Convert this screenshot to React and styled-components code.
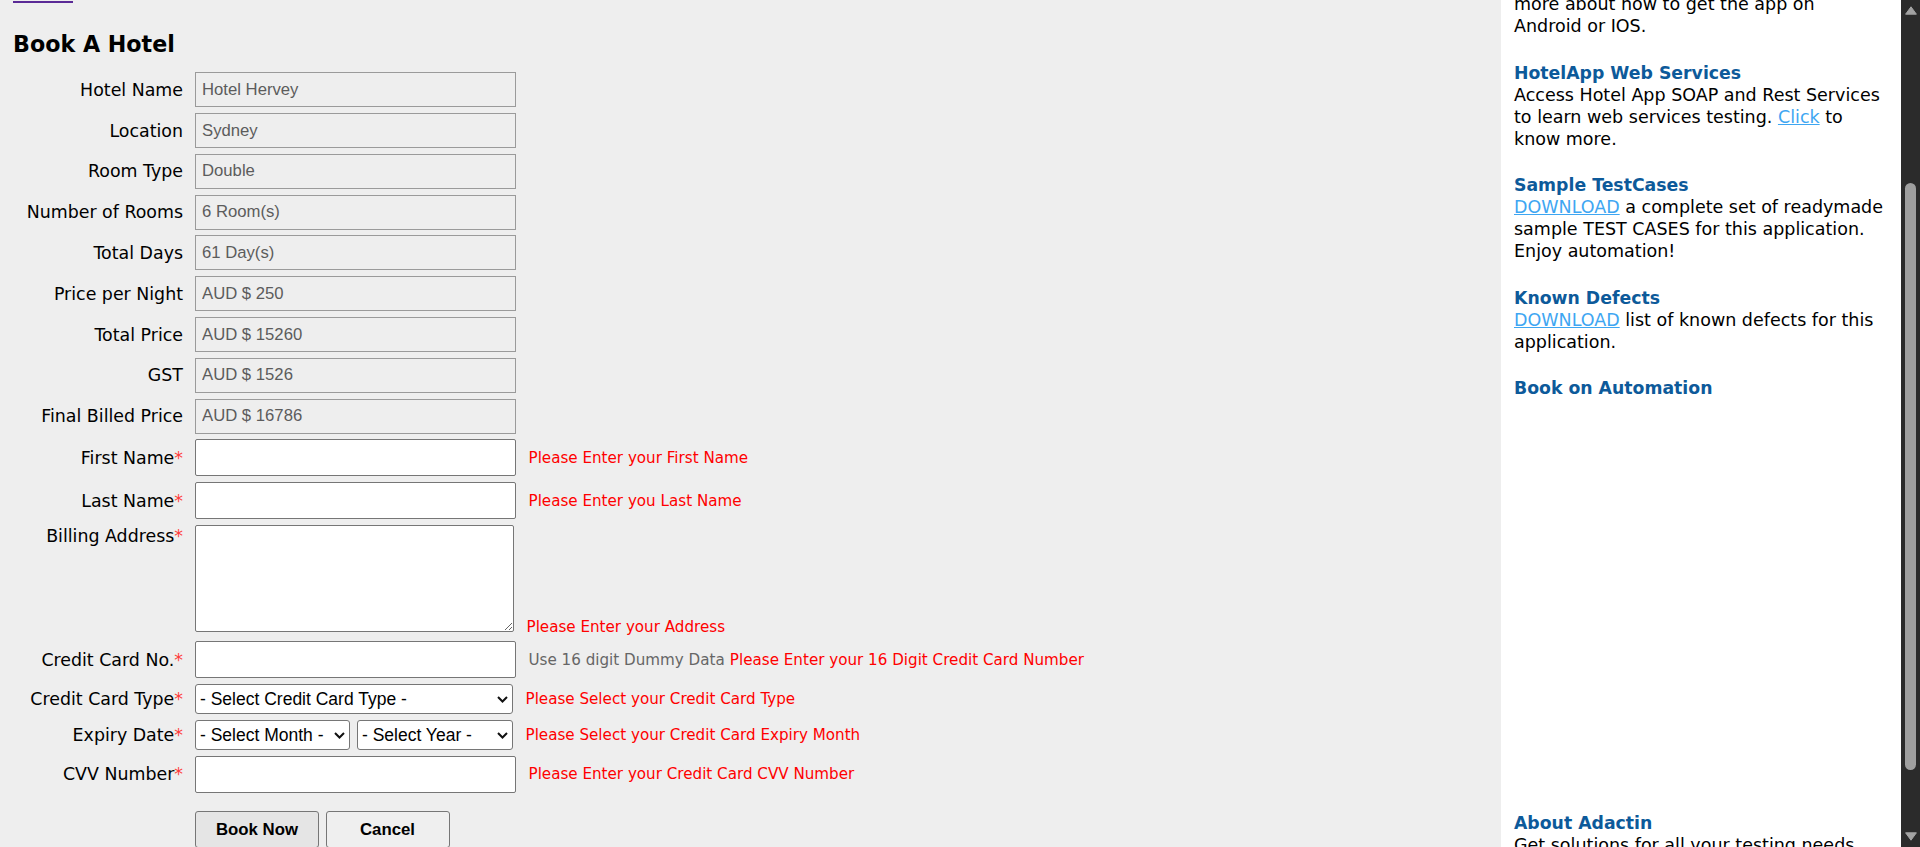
import React from 'react';
import styled, { createGlobalStyle } from 'styled-components';

const GlobalStyle = createGlobalStyle`
  html, body {
    margin: 0;
    padding: 0;
    height: 100%;
    overflow: hidden;
    background: #eeeeee;
  }
  body {
    font-family: "DejaVu Sans", Verdana, sans-serif;
    color: #000;
  }
`;

const bookingSummary = [
  ['Hotel Name', 'Hotel Hervey'],
  ['Location', 'Sydney'],
  ['Room Type', 'Double'],
  ['Number of Rooms', '6 Room(s)'],
  ['Total Days', '61 Day(s)'],
  ['Price per Night', 'AUD $ 250'],
  ['Total Price', 'AUD $ 15260'],
  ['GST', 'AUD $ 1526'],
  ['Final Billed Price', 'AUD $ 16786'],
];

export default function App() {
  return (
    <>
      <GlobalStyle />
      <Page>
        <Main>
          <VisitedLink />
          <Title>Book A Hotel</Title>
          <Form onSubmit={e => e.preventDefault()}>
            {bookingSummary.map(([label, value]) => (
              <React.Fragment key={label}>
                <Label>{label}</Label>
                <Field>
                  <TextInput $readonly readOnly value={value} />
                </Field>
              </React.Fragment>
            ))}

            <Label>First Name<Req>*</Req></Label>
            <Field>
              <TextInput type="text" />
              <Msg>Please Enter your First Name</Msg>
            </Field>

            <Label>Last Name<Req>*</Req></Label>
            <Field>
              <TextInput type="text" />
              <Msg>Please Enter you Last Name</Msg>
            </Field>

            <Label $top>Billing Address<Req>*</Req></Label>
            <Field $bottom>
              <Address />
              <Msg>Please Enter your Address</Msg>
            </Field>

            <Label>Credit Card No.<Req>*</Req></Label>
            <Field>
              <TextInput type="text" maxLength={16} />
              <span>
                <Msg $hint>Use 16 digit Dummy Data</Msg>{' '}
                <Msg>Please Enter your 16 Digit Credit Card Number</Msg>
              </span>
            </Field>

            <Label>Credit Card Type<Req>*</Req></Label>
            <Field>
              <Dropdown width={318}>
                <option>- Select Credit Card Type -</option>
                <option>American Express</option>
                <option>VISA</option>
                <option>Master Card</option>
                <option>Other</option>
              </Dropdown>
              <Msg>Please Select your Credit Card Type</Msg>
            </Field>

            <Label>Expiry Date<Req>*</Req></Label>
            <Field>
              <SelectPair>
                <Dropdown width={155}>
                  <option>- Select Month -</option>
                  <option>January</option>
                  <option>February</option>
                </Dropdown>
                <Dropdown width={156}>
                  <option>- Select Year -</option>
                  <option>2025</option>
                  <option>2026</option>
                </Dropdown>
              </SelectPair>
              <Msg>Please Select your Credit Card Expiry Month</Msg>
            </Field>

            <Label>CVV Number<Req>*</Req></Label>
            <Field>
              <TextInput type="text" maxLength={4} />
              <Msg>Please Enter your Credit Card CVV Number</Msg>
            </Field>

            <span />
            <Actions>
              <Button type="submit" $primary>Book Now</Button>
              <Button type="button">Cancel</Button>
            </Actions>
          </Form>
        </Main>

        <Sidebar>
          <Block>
            <Text>more about how to get the app on<br />Android or IOS.</Text>
          </Block>
          <Block>
            <BlockTitle>HotelApp Web Services</BlockTitle>
            <Text>
              Access Hotel App SOAP and Rest Services<br />
              to learn web services testing. <Link href="#">Click</Link> to<br />
              know more.
            </Text>
          </Block>
          <Block>
            <BlockTitle>Sample TestCases</BlockTitle>
            <Text>
              <Link href="#">DOWNLOAD</Link> a complete set of readymade<br />
              sample TEST CASES for this application.<br />
              Enjoy automation!
            </Text>
          </Block>
          <Block>
            <BlockTitle>Known Defects</BlockTitle>
            <Text>
              <Link href="#">DOWNLOAD</Link> list of known defects for this<br />
              application.
            </Text>
          </Block>
          <Block>
            <BlockTitle>Book on Automation</BlockTitle>
            <CoverSlot />
          </Block>
          <Block>
            <BlockTitle>About Adactin</BlockTitle>
            <Text>Get solutions for all your testing needs.</Text>
          </Block>
        </Sidebar>

        <ScrollBar>
          <ScrollArrow viewBox="0 0 12 9">
            <path d="M6 0.8 L11.4 8.2 L0.6 8.2 Z" fill="#a3a3a3" stroke="#a3a3a3" strokeLinejoin="round" />
          </ScrollArrow>
          <Thumb $offset={168} $size={587} />
          <Spacer />
          <ScrollArrow viewBox="0 0 12 9">
            <path d="M0.6 0.8 L11.4 0.8 L6 8.2 Z" fill="#a3a3a3" stroke="#a3a3a3" strokeLinejoin="round" />
          </ScrollArrow>
        </ScrollBar>
      </Page>
    </>
  );
}

function Dropdown({ width, children }) {
  return (
    <SelectWrap>
      <Select $width={width}>{children}</Select>
      <Chevron viewBox="0 0 11 7">
        <path d="M1 1 L5.5 5.5 L10 1" fill="none" stroke="#111" strokeWidth="2" />
      </Chevron>
    </SelectWrap>
  );
}

const Page = styled.div`
  display: flex;
  height: 100vh;
  overflow: hidden;
`;

const Main = styled.main`
  flex: 1;
  min-width: 0;
  padding-left: 13px;
  overflow: hidden;
`;

const VisitedLink = styled.div`
  width: 60px;
  height: 2px;
  margin-top: 1px;
  background: #5a2a96;
`;

const Title = styled.h2`
  margin: 27px 0 14.3px;
  font-size: 22.2px;
  line-height: 28px;
  font-weight: bold;
`;

const Form = styled.form`
  display: grid;
  grid-template-columns: 170px auto;
  justify-content: start;
  column-gap: 12px;
  row-gap: 5.8px;
  align-items: center;
`;

const Label = styled.label`
  align-self: ${p => (p.$top ? 'start' : 'center')};
  text-align: right;
  font-size: 17.4px;
  line-height: 22px;
  white-space: nowrap;
`;

const Req = styled.span`
  color: #ff3a3a;
`;

const Field = styled.div`
  display: flex;
  align-items: ${p => (p.$bottom ? 'flex-end' : 'center')};
  gap: 12.5px;
  white-space: nowrap;
`;

const TextInput = styled.input`
  box-sizing: border-box;
  width: 321px;
  height: ${p => (p.$readonly ? '35px' : '37px')};
  margin: 0;
  padding: 0 6px;
  border: 1px solid ${p => (p.$readonly ? '#9a9a9a' : '#767676')};
  border-radius: ${p => (p.$readonly ? '0' : '2px')};
  background: ${p => (p.$readonly ? '#eeeeee' : '#fff')};
  color: ${p => (p.$readonly ? '#5c5c5c' : '#000')};
  font-family: "Liberation Sans", Arial, sans-serif;
  font-size: 16.7px;
  outline: none;
`;

const Address = styled.textarea`
  box-sizing: border-box;
  width: 319px;
  height: 107px;
  margin: 0 0 3.5px;
  border: 1px solid #767676;
  border-radius: 2px;
  background: #fff;
  font-family: "Liberation Sans", Arial, sans-serif;
  font-size: 16.6px;
  outline: none;
`;

const Msg = styled.span`
  font-size: 15.15px;
  color: ${p => (p.$hint ? '#666' : '#ff0000')};
`;

const SelectPair = styled.div`
  display: flex;
  gap: 7px;
`;

const SelectWrap = styled.div`
  position: relative;
  display: inline-block;
`;

const Select = styled.select`
  box-sizing: border-box;
  appearance: none;
  width: ${p => p.$width}px;
  height: 30px;
  margin: 0;
  padding: 0 22px 0 4px;
  border: 1px solid #767676;
  border-radius: 3px;
  background: #fff;
  color: #000;
  font-family: "Liberation Sans", Arial, sans-serif;
  font-size: 17.5px;
  outline: none;
`;

const Chevron = styled.svg`
  position: absolute;
  right: 5px;
  top: 50%;
  width: 11px;
  height: 7px;
  margin-top: -3px;
  pointer-events: none;
`;

const Actions = styled.div`
  display: flex;
  gap: 6.5px;
  margin-top: 12.6px;
`;

const Button = styled.button`
  box-sizing: border-box;
  width: 124px;
  height: 37px;
  border: 1px solid #767676;
  border-radius: 3px;
  background: ${p => (p.$primary ? '#e5e5e5' : '#efefef')};
  color: #000;
  font-family: "Liberation Sans", Arial, sans-serif;
  font-size: 16.8px;
  font-weight: bold;
  cursor: pointer;
`;

const Sidebar = styled.aside`
  box-sizing: border-box;
  flex: none;
  width: 400px;
  padding: 0 12px 0 13px;
  background: #fff;
  overflow: hidden;
  font-size: 17.5px;
  line-height: 22px;
  white-space: nowrap;
`;

const Block = styled.div`
  margin-bottom: 24.5px;

  &:first-child {
    margin-top: -7px;
  }
`;

const BlockTitle = styled.h3`
  margin: 0;
  font-size: 17.3px;
  line-height: inherit;
  font-weight: bold;
  color: #0d5a9a;
`;

const Text = styled.p`
  margin: 0;
`;

const Link = styled.a`
  color: #3ea6f2;
  text-decoration: underline;
`;

const CoverSlot = styled.div`
  height: 388px;
`;

const ScrollBar = styled.div`
  flex: none;
  width: 19px;
  display: flex;
  flex-direction: column;
  align-items: center;
  padding: 6px 0;
  box-sizing: border-box;
  background: #2b2b2b;
`;

const ScrollArrow = styled.svg`
  width: 12px;
  height: 9px;
  flex: none;
`;

const Thumb = styled.div`
  width: 11px;
  flex: none;
  margin-top: ${p => p.$offset}px;
  height: ${p => p.$size}px;
  border-radius: 6px;
  background: #9f9f9f;
`;

const Spacer = styled.div`
  flex: 1;
`;
